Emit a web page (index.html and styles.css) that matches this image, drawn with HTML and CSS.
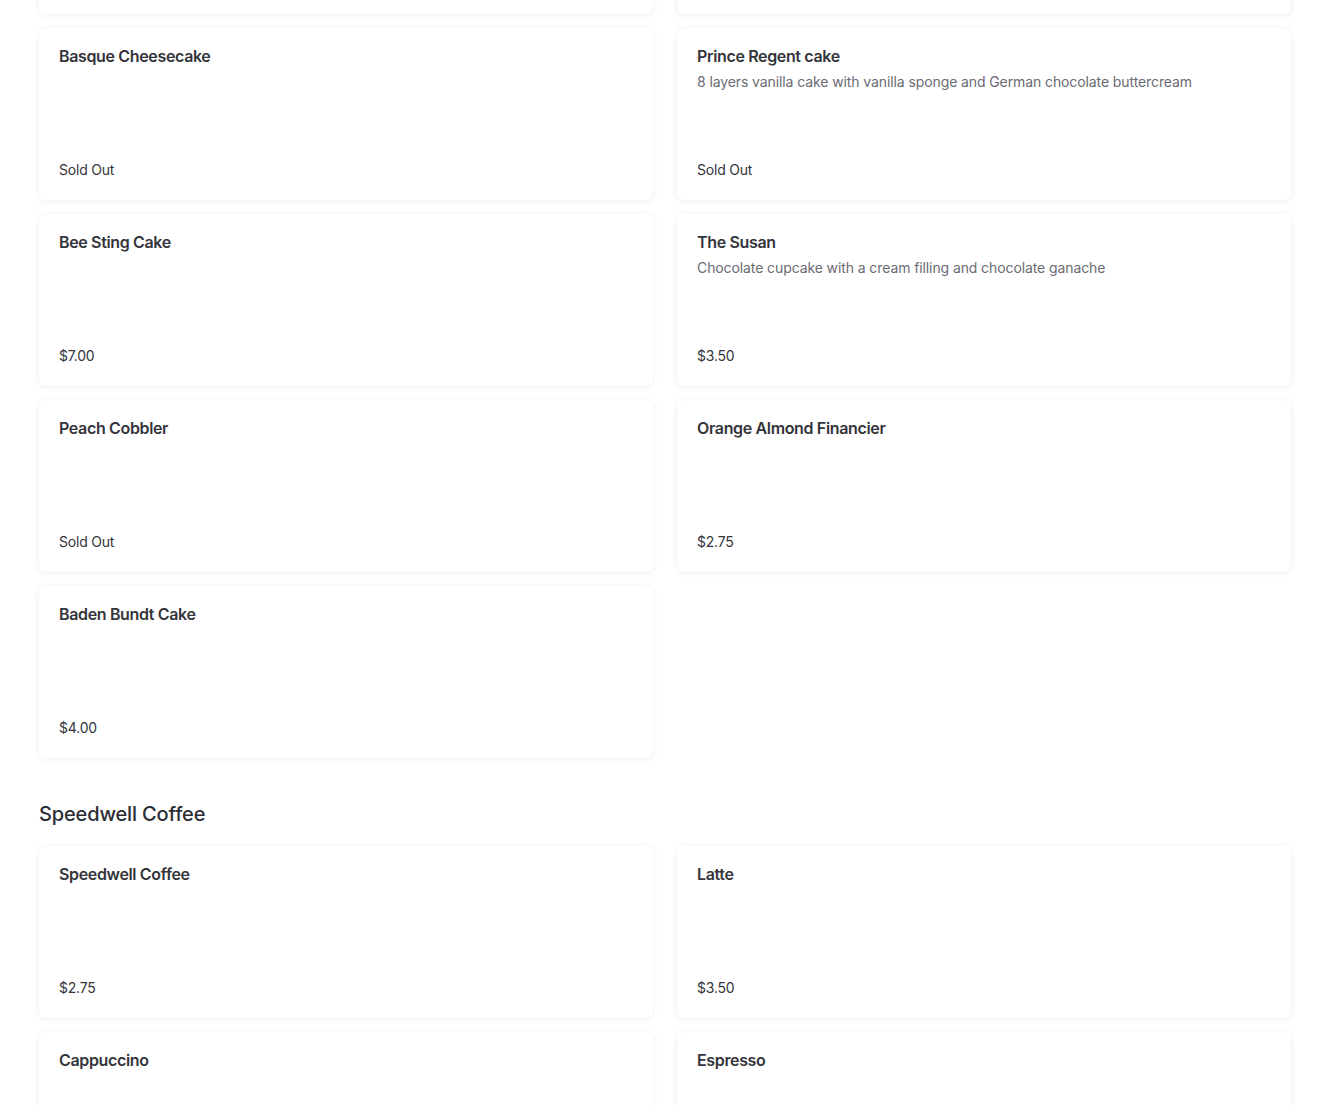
FILE: index.html
```html
<!DOCTYPE html>
<html lang="en">
<head>
    <meta charset="UTF-8">
    <meta name="viewport" content="width=device-width, initial-scale=1.0">
    <title>Menu</title>
    <link rel="stylesheet" href="styles.css">
</head>
<body>

<div class="menu">
    <section class="menu-section first">
        <div class="item-grid">
            <div class="item-card">
                <div class="item-info"><div class="item-name">&nbsp;</div></div>
                <div class="item-price">&nbsp;</div>
            </div>
            <div class="item-card">
                <div class="item-info"><div class="item-name">&nbsp;</div></div>
                <div class="item-price">&nbsp;</div>
            </div>
            <div class="item-card">
                <div class="item-info"><div class="item-name">Basque Cheesecake</div></div>
                <div class="item-price">Sold Out</div>
            </div>
            <div class="item-card">
                <div class="item-info">
                    <div class="item-name">Prince Regent cake</div>
                    <div class="item-desc">8 layers vanilla cake with vanilla sponge and German chocolate buttercream</div>
                </div>
                <div class="item-price">Sold Out</div>
            </div>
            <div class="item-card">
                <div class="item-info"><div class="item-name">Bee Sting Cake</div></div>
                <div class="item-price">$7.00</div>
            </div>
            <div class="item-card">
                <div class="item-info">
                    <div class="item-name">The Susan</div>
                    <div class="item-desc">Chocolate cupcake with a cream filling and chocolate ganache</div>
                </div>
                <div class="item-price">$3.50</div>
            </div>
            <div class="item-card">
                <div class="item-info"><div class="item-name">Peach Cobbler</div></div>
                <div class="item-price">Sold Out</div>
            </div>
            <div class="item-card">
                <div class="item-info"><div class="item-name">Orange Almond Financier</div></div>
                <div class="item-price">$2.75</div>
            </div>
            <div class="item-card">
                <div class="item-info"><div class="item-name">Baden Bundt Cake</div></div>
                <div class="item-price">$4.00</div>
            </div>
        </div>
    </section>

    <section class="menu-section">
        <h2 class="section-title">Speedwell Coffee</h2>
        <div class="item-grid">
            <div class="item-card">
                <div class="item-info"><div class="item-name">Speedwell Coffee</div></div>
                <div class="item-price">$2.75</div>
            </div>
            <div class="item-card">
                <div class="item-info"><div class="item-name">Latte</div></div>
                <div class="item-price">$3.50</div>
            </div>
            <div class="item-card">
                <div class="item-info"><div class="item-name">Cappuccino</div></div>
            </div>
            <div class="item-card">
                <div class="item-info"><div class="item-name">Espresso</div></div>
            </div>
        </div>
    </section>
</div>

</body>
</html>
```

FILE: styles.css
```css
body {
    margin: 0;
    font-family: Inter, "Noto Sans", sans-serif;
    color: #2d2d35;
    background: #fff;
}
.menu {
    padding: 0 39px;
    height: 1105px;
    overflow: hidden;
}
.menu-section.first {
    margin-top: -158px;
}
.section-title {
    margin: 42px 0 18px;
    font-size: 20px;
    line-height: 28px;
    font-weight: 500;
    letter-spacing: -0.15px;
    color: #2d2d35;
}
.item-grid {
    display: grid;
    grid-template-columns: 1fr 1fr;
    column-gap: 24px;
    row-gap: 14px;
}
.item-card {
    height: 172px;
    box-sizing: border-box;
    padding: 18px 20px 20px;
    display: flex;
    flex-direction: column;
    justify-content: space-between;
    background: #fff;
    border-radius: 6px;
    box-shadow: 0 1px 6px rgba(0,0,0,0.07), 0 0 1px rgba(0,0,0,0.05);
}
.item-name {
    font-size: 16px;
    line-height: 20px;
    font-weight: 600;
    letter-spacing: -0.35px;
    color: #34343b;
}
.item-desc {
    margin-top: 6px;
    font-size: 14px;
    line-height: 20px;
    letter-spacing: -0.1px;
    color: #6b6b73;
}
.item-price {
    font-size: 14px;
    line-height: 20px;
    letter-spacing: -0.2px;
    color: #35353c;
}
```
